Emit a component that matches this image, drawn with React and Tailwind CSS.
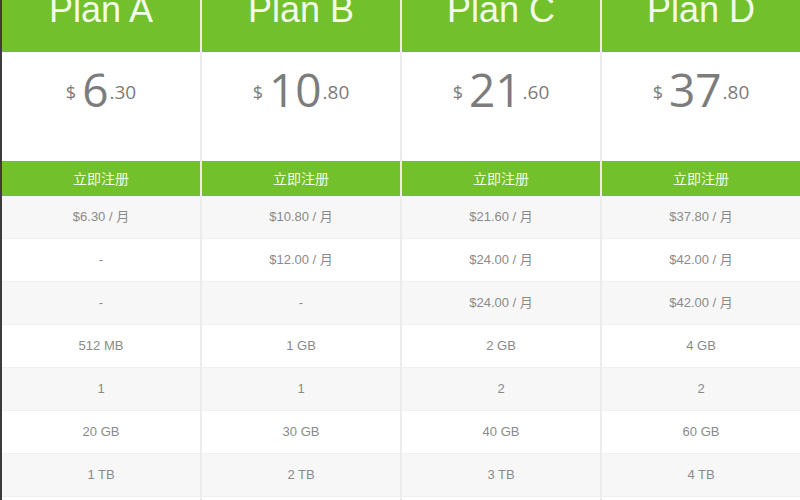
import React from 'react';

const PLANS = [
    { name: 'Plan A', whole: '6', cents: '.30', rows: ['$6.30 / 月', '-', '-', '512 MB', '1', '20 GB', '1 TB', ''] },
    { name: 'Plan B', whole: '10', cents: '.80', rows: ['$10.80 / 月', '$12.00 / 月', '-', '1 GB', '1', '30 GB', '2 TB', ''] },
    { name: 'Plan C', whole: '21', cents: '.60', rows: ['$21.60 / 月', '$24.00 / 月', '$24.00 / 月', '2 GB', '2', '40 GB', '3 TB', ''] },
    { name: 'Plan D', whole: '37', cents: '.80', rows: ['$37.80 / 月', '$42.00 / 月', '$42.00 / 月', '4 GB', '2', '60 GB', '4 TB', ''] }
];

const PlanColumn = ({ plan }) => (
    <div className="flex-1 flex flex-col min-w-0">
        {/* Title */}
        <div className="h-[52px] shrink-0 bg-[#72c02c] overflow-hidden text-center">
            <div className="-mt-[6px] text-[36px] leading-[32px] text-[#f3fbea] font-['Liberation_Sans',Arial,sans-serif]">
                {plan.name}
            </div>
        </div>

        {/* Price */}
        <div className="h-[109px] shrink-0 bg-white pt-[14px] flex justify-center items-baseline text-[#7c7c7c] font-['Open_Sans',sans-serif] leading-none">
            <span className="relative -top-[8px] text-[18px] mr-[6px]">$</span>
            <span className="text-[46px]">{plan.whole}</span>
            <span className="relative -top-[8px] text-[19px] ml-[1px]">{plan.cents}</span>
        </div>

        {/* Sign up */}
        <div className="h-[35px] shrink-0 bg-[#72c02c] flex items-center justify-center text-[14px] text-[#f3fbea] font-['Noto_Sans_CJK_SC',sans-serif]">
            立即注册
        </div>

        {/* Features */}
        {plan.rows.map((row, i) => (
            <div
                key={i}
                className={`h-[43px] shrink-0 flex items-center justify-center border-b border-[#f0f0f0] text-[13px] text-[#8a8a8a] font-['Liberation_Sans','Noto_Sans_CJK_SC',sans-serif] ${i % 2 === 0 ? 'bg-[#f7f7f7]' : 'bg-white'}`}
            >
                {row}
            </div>
        ))}
    </div>
);

export default function App() {
    return (
        <div className="w-[800px] h-[500px] overflow-hidden border-l-2 border-[#3c3c3c] bg-[#ececec] flex gap-[2px]">
            {PLANS.map((plan) => (
                <PlanColumn key={plan.name} plan={plan} />
            ))}
        </div>
    );
}
